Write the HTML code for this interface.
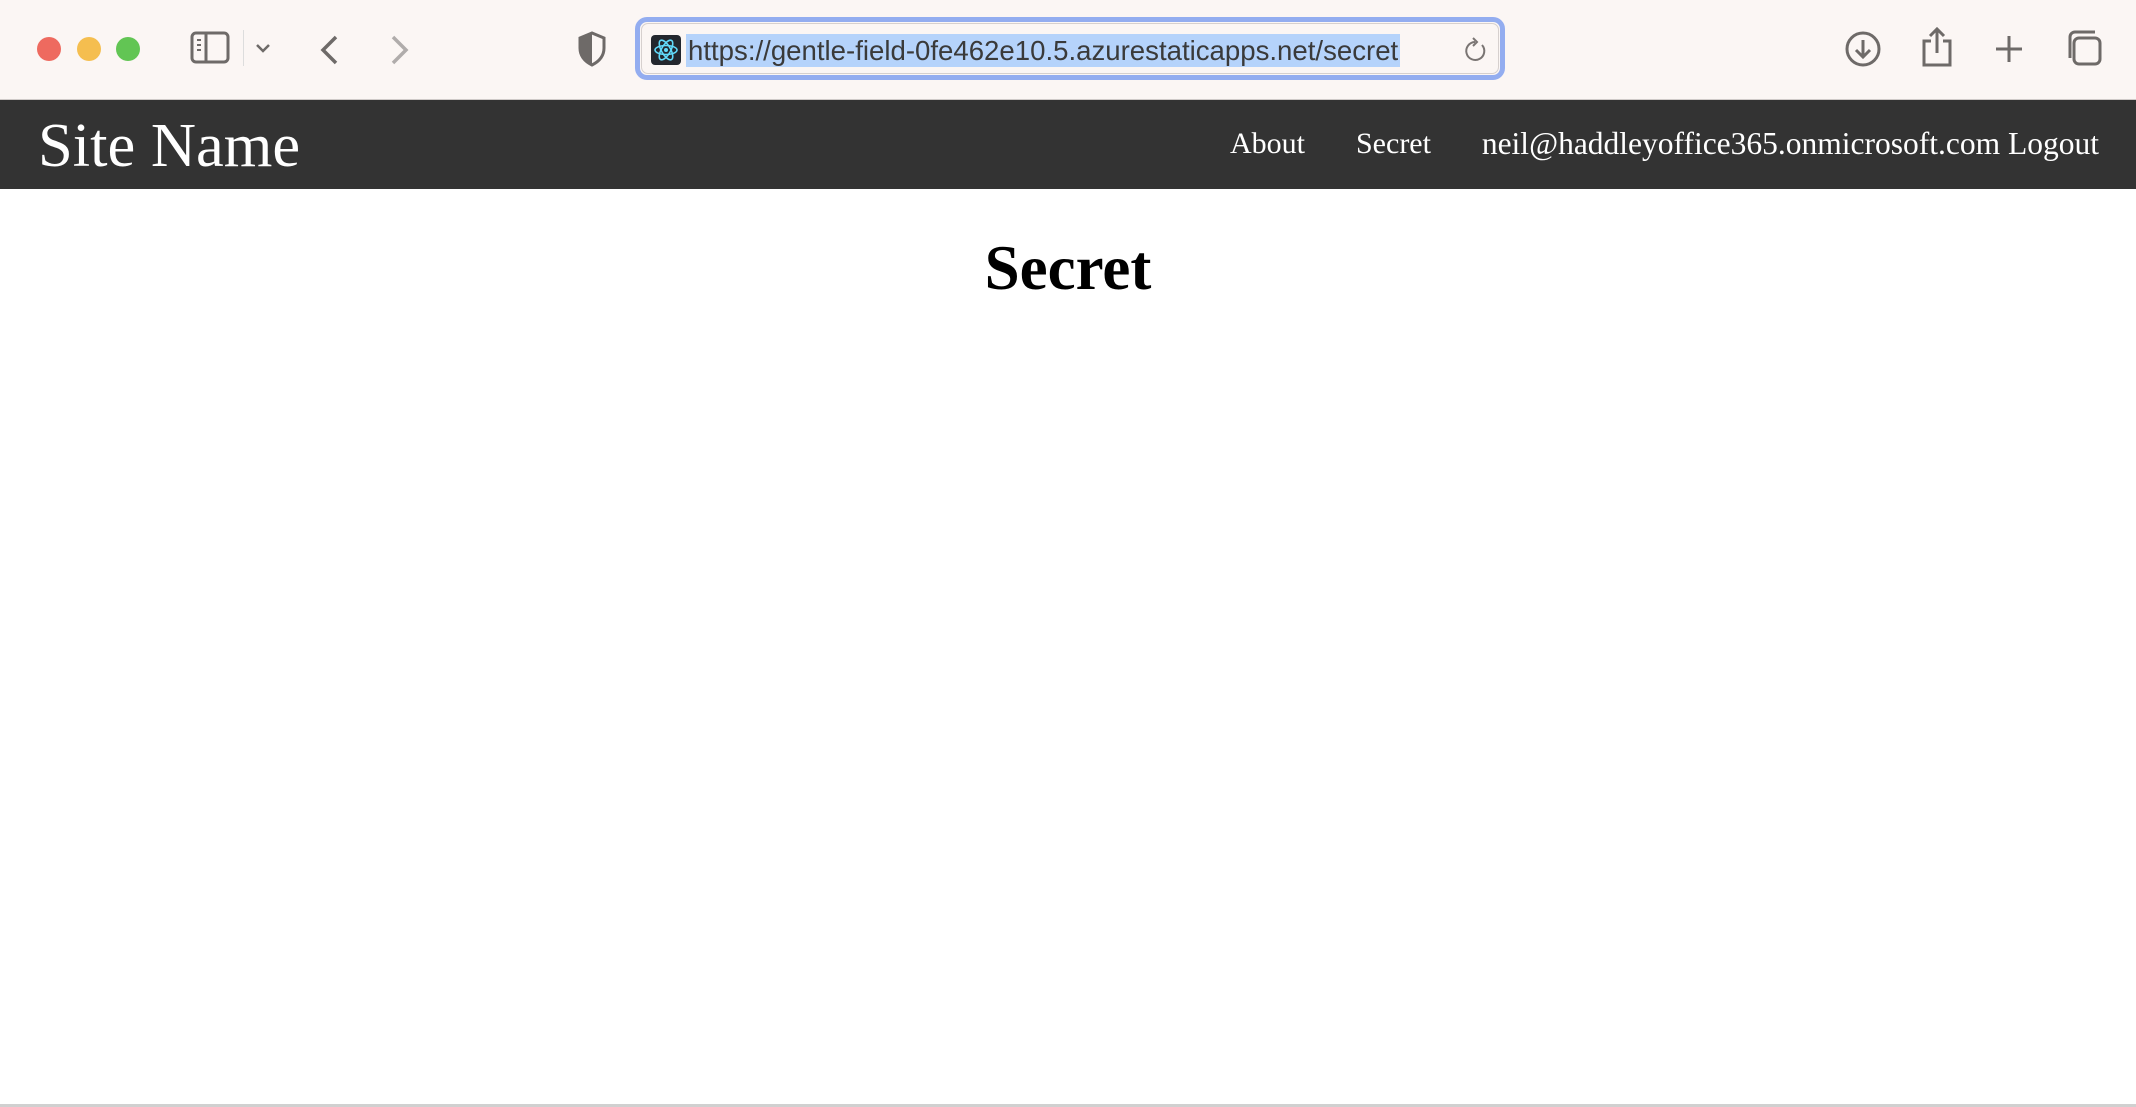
<!DOCTYPE html>
<html><head><meta charset="utf-8"><style>
*{margin:0;padding:0;box-sizing:border-box}
body{width:2136px;height:1107px;overflow:hidden;background:#fff;position:relative;font-family:"Liberation Serif",serif}
#tb{position:absolute;left:0;top:0;width:2136px;height:100px;background:#fbf6f4;border-bottom:1px solid #cfcac8}
.dot{position:absolute;top:37px;width:24px;height:24px;border-radius:50%}
#url{position:absolute;left:635px;top:17px;width:870px;height:63px;border:5px solid #93adf0;border-radius:12px;background:#fbf6f4}
#url .in{position:absolute;left:1px;top:1px;right:1px;bottom:1px;border:1px solid #d6d0ce;border-radius:7px}
#fav{position:absolute;left:11px;top:13px;width:30px;height:30px;background:#23272e;border-radius:4px}
#ut{position:absolute;left:46px;top:12px;height:33px;line-height:33px;background:#b5d3fb;font-family:"Liberation Sans",sans-serif;font-size:27.6px;color:#3a3a3a;padding:0 2px}
#nav{position:absolute;left:0;top:100px;width:2136px;height:89px;background:#333;color:#fff}
#sn{position:absolute;left:38px;top:9px;font-size:62.5px;line-height:72px}
.lk{position:absolute;top:26px;font-size:30px;line-height:36px;white-space:nowrap}
h1{position:absolute;left:0;width:2136px;top:230px;text-align:center;font-size:63px;line-height:76px;font-weight:bold}
#bot{position:absolute;left:0;top:1104px;width:2136px;height:3px;background:#d0d0d0}
</style></head><body>
<div id="tb">
<div class="dot" style="left:37px;background:#ee6a5f"></div>
<div class="dot" style="left:77px;background:#f5be4f"></div>
<div class="dot" style="left:116px;background:#62c554"></div>
<svg style="position:absolute;left:190px;top:30px" width="40" height="36" viewBox="0 0 40 36"><rect x="2" y="3" width="36" height="29" rx="4" fill="none" stroke="#6e6a68" stroke-width="3"/><line x1="16" y1="3" x2="16" y2="32" stroke="#6e6a68" stroke-width="3"/><line x1="7" y1="10" x2="11" y2="10" stroke="#6e6a68" stroke-width="2"/><line x1="7" y1="15" x2="11" y2="15" stroke="#6e6a68" stroke-width="2"/><line x1="7" y1="20" x2="11" y2="20" stroke="#6e6a68" stroke-width="2"/></svg>
<div style="position:absolute;left:243px;top:30px;width:1px;height:36px;background:#ddd"></div>
<svg style="position:absolute;left:255px;top:42px" width="16" height="12" viewBox="0 0 16 12"><path d="M2 3l6 6 6-6" fill="none" stroke="#6e6a68" stroke-width="2.5"/></svg>
<svg style="position:absolute;left:318px;top:34px" width="22" height="32" viewBox="0 0 22 32"><path d="M18 3L5 16l13 13" fill="none" stroke="#6e6a68" stroke-width="3.5"/></svg>
<svg style="position:absolute;left:389px;top:34px" width="22" height="32" viewBox="0 0 22 32"><path d="M4 3l13 13L4 29" fill="none" stroke="#b0acab" stroke-width="3.5"/></svg>
<svg style="position:absolute;left:577px;top:31px" width="30" height="36" viewBox="0 0 30 36"><path d="M15 2L3 7v10c0 9 6 14 12 17 6-3 12-8 12-17V7z" fill="none" stroke="#6e6a68" stroke-width="3"/><path d="M15 2L3 7v10c0 9 6 14 12 17z" fill="#6e6a68"/></svg>
<div id="url"><div class="in"></div>
<div id="fav"><svg width="30" height="30" viewBox="0 0 30 30"><g fill="none" stroke="#61dafb" stroke-width="1.6"><ellipse cx="15" cy="15" rx="11" ry="4.5"/><ellipse cx="15" cy="15" rx="11" ry="4.5" transform="rotate(60 15 15)"/><ellipse cx="15" cy="15" rx="11" ry="4.5" transform="rotate(120 15 15)"/></g><circle cx="15" cy="15" r="2" fill="#61dafb"/></svg></div>
<div id="ut">https://gentle-field-0fe462e10.5.azurestaticapps.net/secret</div>
<svg style="position:absolute;left:822px;top:13px" width="28" height="30" viewBox="0 0 28 30"><path d="M20 10a9 9 0 1 1-7-3" fill="none" stroke="#7a7573" stroke-width="2"/><path d="M11 3l4 4-4 4" fill="none" stroke="#7a7573" stroke-width="2"/></svg>
</div>
<svg style="position:absolute;left:1844px;top:30px" width="38" height="38" viewBox="0 0 38 38"><circle cx="19" cy="19" r="16" fill="none" stroke="#6e6a68" stroke-width="3"/><path d="M19 10v17M12 20l7 7 7-7" fill="none" stroke="#6e6a68" stroke-width="3"/></svg>
<svg style="position:absolute;left:1920px;top:26px" width="34" height="42" viewBox="0 0 34 42"><path d="M11 15H4v24h26V15h-7" fill="none" stroke="#6e6a68" stroke-width="3"/><path d="M17 27V3M10 10l7-7 7 7" fill="none" stroke="#6e6a68" stroke-width="3"/></svg>
<svg style="position:absolute;left:1994px;top:34px" width="30" height="30" viewBox="0 0 30 30"><path d="M15 2v26M2 15h26" stroke="#6e6a68" stroke-width="3"/></svg>
<svg style="position:absolute;left:2064px;top:28px" width="40" height="40" viewBox="0 0 40 40"><rect x="10" y="10" width="26" height="26" rx="5" fill="none" stroke="#6e6a68" stroke-width="3"/><path d="M6 30V9a5 5 0 0 1 5-5h20" fill="none" stroke="#6e6a68" stroke-width="3"/></svg>
</div>
<div id="nav">
<div id="sn">Site Name</div>
<div class="lk" style="left:1230px">About</div>
<div class="lk" style="left:1356px">Secret</div>
<div class="lk" style="right:37px;font-size:31.5px">neil@haddleyoffice365.onmicrosoft.com Logout</div>
</div>
<h1>Secret</h1>
<div id="bot"></div>
</body></html>
